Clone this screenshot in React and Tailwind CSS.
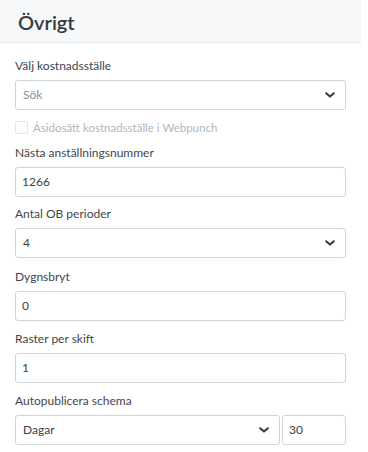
import React from "react";

const font = { fontFamily: "Lato, 'Noto Sans', sans-serif" };

function Chevron() {
  return (
    <svg width="10" height="6" viewBox="0 0 10 6" className="shrink-0">
      <polyline
        points="1.2,1.2 5,4.6 8.8,1.2"
        fill="none"
        stroke="#343a40"
        strokeWidth="2"
        strokeLinecap="round"
        strokeLinejoin="round"
      />
    </svg>
  );
}

function Label({ children }) {
  return (
    <div className="text-[12px] leading-[18px] text-[#41464b] mb-[5px]">
      {children}
    </div>
  );
}

function TextBox({ value }) {
  return (
    <div className="h-[30px] border border-[#ced4da] rounded-[3px] bg-white flex items-center pl-[6px] text-[12px] text-[#3a3f44]">
      {value}
    </div>
  );
}

function SelectBox({ value, muted }) {
  return (
    <div className="h-[30px] border border-[#ced4da] rounded-[3px] bg-white flex items-center justify-between pl-[7px] pr-[10px] text-[12px]">
      <span className={muted ? "text-[#8a8f94]" : "text-[#3a3f44]"}>{value}</span>
      <Chevron />
    </div>
  );
}

export default function App() {
  return (
    <div className="w-[368px] h-[452px] bg-white overflow-hidden" style={font}>
      {/* Header */}
      <div className="w-[361px] h-[43px] bg-[#f7f8fa] border-b border-[#e9ecef] flex items-center pl-[18px] pt-[2px]">
        <h2 className="text-[20px] font-semibold text-[#343a40] leading-none">Övrigt</h2>
      </div>

      <div className="pl-[15px] w-[346px] pt-[14px] flex flex-col">
        <div>
          <Label>Välj kostnadsställe</Label>
          <SelectBox value="Sök" muted />
        </div>

        <div className="flex items-center gap-[5px] mt-[11px] h-[13px]">
          <div className="w-[13px] h-[13px] border border-[#e3e6e9] rounded-[2px] bg-white" />
          <span className="text-[11.5px] text-[#b3b7bb]">Åsidosätt kostnadsställe i Webpunch</span>
        </div>

        <div className="mt-[10px]">
          <Label>Nästa anställningsnummer</Label>
          <TextBox value="1266" />
        </div>

        <div className="mt-[8px]">
          <Label>Antal OB perioder</Label>
          <SelectBox value="4" />
        </div>

        <div className="mt-[10px]">
          <Label>Dygnsbryt</Label>
          <TextBox value="0" />
        </div>

        <div className="mt-[9px]">
          <Label>Raster per skift</Label>
          <TextBox value="1" />
        </div>

        <div className="mt-[9px]">
          <Label>Autopublicera schema</Label>
          <div className="flex gap-[2px]">
            <div className="w-[265px]">
              <SelectBox value="Dagar" />
            </div>
            <div className="flex-1">
              <TextBox value="30" />
            </div>
          </div>
        </div>
      </div>
    </div>
  );
}
